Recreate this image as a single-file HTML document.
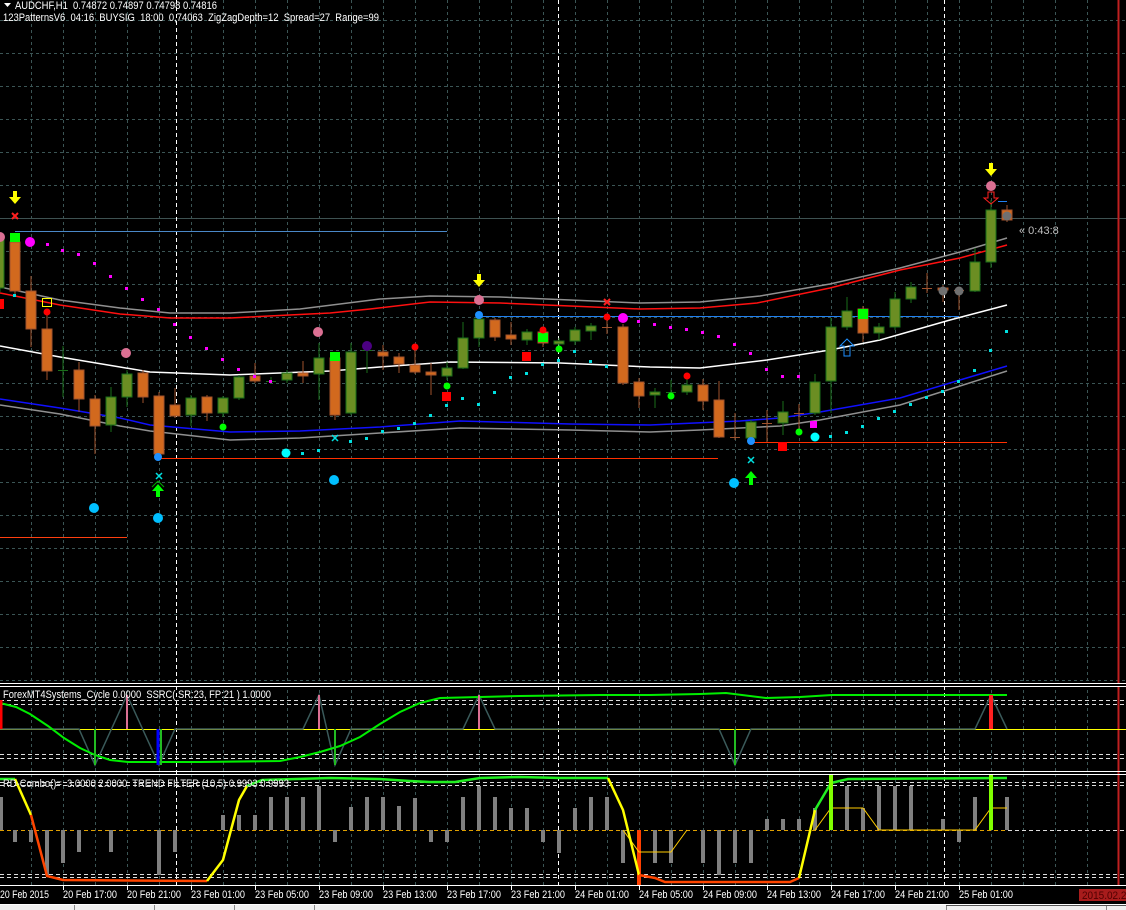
<!DOCTYPE html>
<html><head><meta charset="utf-8"><style>
html,body{margin:0;padding:0;background:#000;width:1126px;height:910px;overflow:hidden}
svg{display:block}
text{font-family:"Liberation Sans",sans-serif;font-size:11px;white-space:pre}
</style></head><body>
<svg width="1126" height="910" viewBox="0 0 1126 910" xmlns="http://www.w3.org/2000/svg" xml:space="preserve">
<rect width="1126" height="910" fill="#000"/>
<g stroke="#3b5555" stroke-width="1" stroke-dasharray="3,3">
<path d="M31.5 0V885M63.5 0V885M95.5 0V885M127.5 0V885M159.5 0V885M191.5 0V885M223.5 0V885M255.5 0V885M287.5 0V885M319.5 0V885M351.5 0V885M383.5 0V885M415.5 0V885M447.5 0V885M479.5 0V885M511.5 0V885M543.5 0V885M575.5 0V885M607.5 0V885M639.5 0V885M671.5 0V885M703.5 0V885M735.5 0V885M767.5 0V885M799.5 0V885M831.5 0V885M863.5 0V885M895.5 0V885M927.5 0V885M959.5 0V885M991.5 0V885M1023.5 0V885M1055.5 0V885M1087.5 0V885"/>
<path d="M0 20.5H1126M0 53.5H1126M0 86.5H1126M0 119.5H1126M0 152.5H1126M0 185.5H1126M0 251.5H1126M0 284.5H1126M0 317.5H1126M0 350.5H1126M0 383.5H1126M0 416.5H1126M0 449.5H1126M0 482.5H1126M0 515.5H1126M0 548.5H1126M0 581.5H1126M0 614.5H1126M0 647.5H1126M0 680.5H1126"/>
</g>
<path d="M0 218.5H1126" stroke="#3e5252"/>
<g stroke="#fff" stroke-dasharray="4,3"><path d="M176.5 0V885M558.5 0V885M944.5 0V885"/></g>
<path d="M1118.5 0V885" stroke="#c02020" stroke-width="2"/>

<path d="M15 231.5H447" stroke="#4a88c8"/>
<path d="M479 316.5H959" stroke="#2080f0"/>
<path d="M160 458.5H718" stroke="#ff3000"/>
<path d="M752 442.5H1007" stroke="#ff3000"/>
<path d="M0 537.5H127" stroke="#ff4010"/>
<path d="M998 201.5H1007" stroke="#2080f0"/>

<g fill="none" stroke-width="1.5">
<polyline stroke="#909090" points="0,287 60,300 120,308 170,313 230,313 300,309 380,299 430,296 500,297 570,300 640,303 700,302 760,296 830,284 900,268 960,252 1007,238"/>
<polyline stroke="#ff1010" points="0,293 60,305 120,314 170,318 230,318 330,313 370,309 430,302 500,303 570,306 640,309 700,308 757,303 830,288 900,270 960,258 1007,245"/>
<polyline stroke="#fff" points="0,346 60,357 120,367 150,372 230,375 330,371 380,367 450,362 560,363 650,367 700,368 767,360 830,350 880,340 950,320 1007,305"/>
<polyline stroke="#1010ff" points="0,399 60,408 120,418 150,425 230,432 300,431 380,427 460,421 570,424 650,425 740,421 780,418 820,412 900,398 960,380 1007,366"/>
<polyline stroke="#909090" points="0,405 60,414 120,426 150,431 230,440 300,438 380,433 460,428 570,430 650,432 700,430 780,426 820,420 900,405 960,386 1007,371"/>
</g>

<g stroke-width="1">
<g stroke="#1a6e1a" fill="#6b8e23">
<path d="M0 236V292M63 346V397M111 387V432M127 370V407M191 395V426M223 396V417M239 375V400M271 377V384M287 370V383M319 343V400M351 343V415M367 344V373M447 362V380M463 322V369M479 316V347M527 329V345M559 338V348M575 327V345M591 323V340M655 388V408M671 380V396M687 376V395M751 420V440M783 401V435M815 374V415M831 318V413M847 297V330M879 323V340M895 292V330M911 282V303M975 248V292M991 200V268" fill="none"/>
<rect x="-4" y="240" width="8" height="48"/>
<rect x="106" y="397" width="10" height="28"/><rect x="122" y="374" width="10" height="23"/>
<rect x="186" y="398" width="10" height="17"/><rect x="218" y="398" width="10" height="15"/>
<rect x="234" y="377" width="10" height="21"/><rect x="282" y="373" width="10" height="7"/>
<rect x="314" y="358" width="10" height="16"/><rect x="346" y="352" width="10" height="61"/>
<rect x="442" y="368" width="10" height="8"/><rect x="458" y="338" width="10" height="30"/>
<rect x="474" y="319" width="10" height="19"/><rect x="522" y="332" width="10" height="8"/>
<rect x="554" y="341" width="10" height="3"/><rect x="570" y="330" width="10" height="11"/>
<rect x="586" y="326" width="10" height="5"/><rect x="650" y="392" width="10" height="3"/>
<rect x="682" y="385" width="10" height="7"/><rect x="746" y="422" width="10" height="16"/>
<rect x="778" y="412" width="10" height="11"/><rect x="810" y="382" width="10" height="31"/>
<rect x="826" y="327" width="10" height="54"/><rect x="842" y="311" width="10" height="16"/>
<rect x="874" y="327" width="10" height="6"/><rect x="890" y="299" width="10" height="28"/>
<rect x="906" y="287" width="10" height="12"/><rect x="970" y="262" width="10" height="29"/>
<rect x="986" y="210" width="10" height="52"/>
<path d="M58 370.5H68M266 381.5H276M362 350.5H372M666 392.5H676" fill="none"/>
</g>
<g stroke="#a0522d" fill="#d2691e">
<path d="M15 233V297M31 276V347M47 315V380M79 362V412M95 395V454M143 370V403M159 392V456M175 388V418M207 395V421M255 363V383M303 361V383M335 352V420M383 345V370M399 353V373M415 350V374M431 363V395M495 318V341M511 322V345M543 330V347M607 320V334M623 324V385M639 378V408M703 379V410M719 381V438M735 413V440M767 410V442M799 404V433M863 306V342M927 273V293M943 285V302M959 287V310M1007 205V222" fill="none"/>
<rect x="10" y="242" width="10" height="49"/><rect x="26" y="291" width="10" height="38"/>
<rect x="42" y="329" width="10" height="42"/><rect x="74" y="370" width="10" height="29"/>
<rect x="90" y="399" width="10" height="27"/><rect x="138" y="373" width="10" height="24"/>
<rect x="154" y="396" width="10" height="58"/><rect x="170" y="405" width="10" height="11"/>
<rect x="202" y="397" width="10" height="16"/><rect x="250" y="376" width="10" height="5"/>
<rect x="298" y="373" width="10" height="3"/><rect x="330" y="358" width="10" height="57"/>
<rect x="378" y="352" width="10" height="4"/><rect x="394" y="357" width="10" height="7"/>
<rect x="410" y="365" width="10" height="7"/><rect x="426" y="372" width="10" height="3"/>
<rect x="490" y="320" width="10" height="17"/><rect x="506" y="335" width="10" height="4"/>
<rect x="538" y="332" width="10" height="11"/><rect x="618" y="327" width="10" height="56"/>
<rect x="634" y="382" width="10" height="14"/><rect x="698" y="385" width="10" height="16"/>
<rect x="714" y="400" width="10" height="37"/><rect x="858" y="309" width="10" height="24"/>
<rect x="938" y="288" width="10" height="2"/><rect x="1002" y="210" width="10" height="10"/>
<path d="M602 327.5H612M730 437.5H740M762 423.5H772M794 413.5H804M922 288.5H932M954 290.5H964" fill="none"/>
</g>
</g>

<g fill="#00ff00"><rect x="10" y="233" width="10" height="9"/><rect x="330" y="352" width="10" height="9"/><rect x="538" y="333" width="10" height="9"/><rect x="858" y="309" width="10" height="10"/></g>
<g fill="#ff0000"><rect x="-4" y="299" width="8" height="10"/><rect x="522" y="352" width="9" height="9"/><rect x="442" y="392" width="9" height="9"/><rect x="778" y="442" width="9" height="9"/></g>
<rect x="810" y="421" width="7" height="7" fill="#ff00ff"/>
<g fill="#ff00ff"><circle cx="30" cy="242" r="5"/><circle cx="623" cy="318" r="5"/></g>
<g fill="#db7093"><circle cx="0" cy="237" r="5"/><circle cx="126" cy="353" r="5"/><circle cx="318" cy="332" r="5"/><circle cx="479" cy="300" r="5"/><circle cx="991" cy="186" r="5"/></g>
<g fill="#1e90ff"><circle cx="158" cy="457" r="4"/><circle cx="479" cy="315" r="4"/><circle cx="751" cy="441" r="4"/></g>
<g fill="#00bfff"><circle cx="94" cy="508" r="5"/><circle cx="158" cy="518" r="5"/><circle cx="334" cy="480" r="5"/><circle cx="734" cy="483" r="5"/></g>
<g fill="#00ffff"><circle cx="286" cy="453" r="4.5"/><circle cx="815" cy="437" r="4.5"/></g>
<g fill="#ff0000"><circle cx="47" cy="312" r="3.5"/><circle cx="415" cy="347" r="3.5"/><circle cx="543" cy="330" r="3.5"/><circle cx="607" cy="317" r="3.5"/><circle cx="687" cy="376" r="3.5"/></g>
<g fill="#00ff00"><circle cx="223" cy="427" r="3.5"/><circle cx="447" cy="386" r="3.5"/><circle cx="559" cy="349" r="3.5"/><circle cx="671" cy="396" r="3.5"/><circle cx="799" cy="432" r="3.5"/></g>
<circle cx="367" cy="346" r="5" fill="#4b0082"/>
<g fill="#707070"><circle cx="1007" cy="216" r="4.5"/><circle cx="943" cy="291" r="4.5"/><circle cx="959" cy="291" r="4.5"/></g>
<g fill="#ff00ff">
<rect x="46" y="243" width="3" height="3"/><rect x="61" y="249" width="3" height="3"/><rect x="77" y="253" width="3" height="3"/><rect x="93" y="262" width="3" height="3"/><rect x="109" y="275" width="3" height="3"/><rect x="125" y="287" width="3" height="3"/><rect x="141" y="298" width="3" height="3"/><rect x="157" y="308" width="3" height="3"/><rect x="173" y="323" width="3" height="3"/><rect x="189" y="336" width="3" height="3"/><rect x="205" y="347" width="3" height="3"/><rect x="221" y="358" width="3" height="3"/><rect x="237" y="368" width="3" height="3"/><rect x="253" y="375" width="3" height="3"/><rect x="269" y="380" width="3" height="3"/>
<rect x="637" y="320" width="3" height="3"/><rect x="653" y="323" width="3" height="3"/><rect x="669" y="326" width="3" height="3"/><rect x="685" y="328" width="3" height="3"/><rect x="701" y="331" width="3" height="3"/><rect x="717" y="335" width="3" height="3"/><rect x="733" y="343" width="3" height="3"/><rect x="749" y="352" width="3" height="3"/><rect x="765" y="368" width="3" height="3"/><rect x="781" y="375" width="3" height="3"/><rect x="797" y="375" width="3" height="3"/>
</g>
<g fill="#00e0e0">
<rect x="13" y="294" width="3" height="3"/><rect x="301" y="452" width="3" height="3"/><rect x="317" y="449" width="3" height="3"/><rect x="349" y="440" width="3" height="3"/><rect x="365" y="437" width="3" height="3"/><rect x="381" y="430" width="3" height="3"/><rect x="397" y="427" width="3" height="3"/><rect x="413" y="422" width="3" height="3"/><rect x="429" y="414" width="3" height="3"/><rect x="445" y="404" width="3" height="3"/><rect x="461" y="397" width="3" height="3"/><rect x="477" y="403" width="3" height="3"/><rect x="493" y="391" width="3" height="3"/><rect x="509" y="376" width="3" height="3"/><rect x="525" y="372" width="3" height="3"/><rect x="541" y="363" width="3" height="3"/><rect x="557" y="359" width="3" height="3"/><rect x="573" y="350" width="3" height="3"/><rect x="589" y="360" width="3" height="3"/><rect x="605" y="365" width="3" height="3"/>
<rect x="829" y="435" width="3" height="3"/><rect x="845" y="431" width="3" height="3"/><rect x="861" y="425" width="3" height="3"/><rect x="877" y="417" width="3" height="3"/><rect x="893" y="410" width="3" height="3"/><rect x="909" y="403" width="3" height="3"/><rect x="925" y="396" width="3" height="3"/><rect x="941" y="390" width="3" height="3"/><rect x="957" y="380" width="3" height="3"/><rect x="973" y="369" width="3" height="3"/><rect x="989" y="349" width="3" height="3"/><rect x="1005" y="330" width="3" height="3"/>
</g>
<g fill="#ffff00"><path d="M13 191h4v6h4l-6 7-6-7h4z"/><path d="M477 274h4v6h4l-6 7-6-7h4z"/><path d="M989 163h4v6h4l-6 7-6-7h4z"/></g>
<g stroke="#ff2020" stroke-width="2"><path d="M12 213l6 6M18 213l-6 6M604 299l6 6M610 299l-6 6"/></g>
<rect x="42.5" y="298.5" width="9" height="8" fill="none" stroke="#ffff00"/>
<g stroke="#00e0e0" stroke-width="1.5"><path d="M156 473l6 6M162 473l-6 6M332 435l6 6M338 435l-6 6M748 457l6 6M754 457l-6 6"/></g>
<g fill="#00ff00"><path d="M158 484l-6 7h4v6h4v-6h4z"/><path d="M751 471l-6 7h4v7h4v-7h4z"/></g>
<path d="M158 481l-6 6M158 481l6 6" stroke="#00aa00"/>
<path d="M847 339l-7 7h4v10h6v-10h4z" fill="none" stroke="#1e90ff"/>
<path d="M988 192v6h-4l7 6 7-6h-4v-6z" fill="none" stroke="#ff2020"/>
<text x="1019" y="234" fill="#c0c0c0" font-size="13">« 0:43:8</text>

<path d="M4 3h7l-3.5 4z" fill="#fff"/>
<text x="15" y="9" fill="#fff" font-size="11" textLength="202" lengthAdjust="spacingAndGlyphs">AUDCHF,H1  0.74872 0.74897 0.74798 0.74816</text>
<text x="3" y="21" fill="#fff" font-size="11" textLength="376" lengthAdjust="spacingAndGlyphs">123PatternsV6  04:16  BUYSIG  18:00  0,74063  ZigZagDepth=12  Spread=27  Range=99</text>

<rect x="0" y="683" width="1126" height="4" fill="#000"/>
<path d="M0 683.5H1126M0 686.5H1126M0 771.5H1126M0 774.5H1126M0 885.5H1126" stroke="#fff"/>

<g stroke="#ddd" stroke-dasharray="4,3"><path d="M0 700.5H1126M0 704.5H1126M0 754.5H1126M0 758.5H1126"/></g>
<path d="M0 729.5H1126" stroke="#ffff00"/>
<polyline fill="none" stroke="#3a5a5a" stroke-width="1.5" points="0,729 79,729 95,765 127,695 159,765 175,729 303,729 319,695 335,765 351,729 463,729 479,695 495,729 719,729 735,765 751,729 975,729 991,695 1007,729"/>
<polyline fill="none" stroke="#00ee00" stroke-width="2" points="0,703 16,707 30,714 48,726 64,738 80,748 95,755 110,760 128,762 160,762 200,762 280,761 300,757 320,752 340,746 360,737 380,724 400,712 420,703 440,698 480,697 520,696 600,695 650,695 700,694 726,693 766,698 800,697 832,695 1007,695"/>
<g stroke-width="2"><path d="M1 700V729" stroke="#ff0000" stroke-width="3"/><path d="M95 729V765M335 729V765M735 729V765" stroke="#22bb22"/><path d="M127 695V729M319 695V729M479 695V729" stroke="#db7093"/><path d="M158 729V765" stroke="#0000ff" stroke-width="3"/><path d="M161 729V765" stroke="#22bb22"/><path d="M991 695V729" stroke="#ff2020" stroke-width="4"/></g>
<text x="3" y="698" fill="#fff" font-size="11" textLength="268" lengthAdjust="spacingAndGlyphs">ForexMT4Systems_Cycle 0.0000  SSRC( SR:23, FP:21 ) 1.0000</text>

<g stroke="#ddd" stroke-dasharray="4,3"><path d="M0 782.5H1126M0 785.5H1126M0 874.5H1126M0 877.5H1126M0 830.5H1126"/></g>
<path d="M0 830.5H1007" stroke="#e0a000" stroke-dasharray="4,3"/>
<g stroke="#808080" stroke-width="4">
<path d="M1 830V797M15 830V842M31 830V842M47 830V875M63 830V863M79 830V852M111 830V852M159 830V875M175 830V852M223 830V815M239 830V815M255 830V815M271 830V797M287 830V797M303 830V797M319 830V786M335 830V842M351 830V807M367 830V797M383 830V797M399 830V806M415 830V798M431 830V842M447 830V842M463 830V797M479 830V786M495 830V797M511 830V808M527 830V808M543 830V842M559 830V853M575 830V808M591 830V797M607 830V797M623 830V863M655 830V863M671 830V863M703 830V863M719 830V875M735 830V863M751 830V863M767 830V819M783 830V819M799 830V819M815 830V808M847 830V786M863 830V808M879 830V786M895 830V786M911 830V786M943 830V819M959 830V842M975 830V797M1007 830V797"/>
</g>
<path d="M639 830V885" stroke="#ff4000" stroke-width="4"/>
<polyline fill="none" stroke="#ffcc00" stroke-width="1" points="623,830 639,852 671,852 687,830"/>
<polyline fill="none" stroke="#ffcc00" stroke-width="1" points="815,830 831,808 863,808 879,830 975,830 991,808 1007,808"/>
<g fill="none" stroke-width="2.5">
<polyline stroke="#22ee22" points="0,779 15,779"/>
<polyline stroke="#ffff00" points="15,779 31,815"/>
<polyline stroke="#ff4500" points="31,815 47,876 63,880 207,881"/>
<polyline stroke="#ffff00" points="207,881 223,860 239,800 247,786"/>
<polyline stroke="#22ee22" points="247,786 262,780 330,778 380,779 410,781 430,782 455,782 480,778 520,777 560,778 608,778"/>
<polyline stroke="#ffff00" points="608,778 623,810 639,875"/>
<polyline stroke="#ff4500" points="639,875 655,878 665,882 790,882 799,878"/>
<polyline stroke="#ffff00" points="799,878 815,810"/>
<polyline stroke="#22ee22" points="815,810 831,783 848,779 1007,778"/>
</g>
<path d="M831 775V830M991 775V830" stroke="#80ff00" stroke-width="4"/>
<text x="3" y="787" fill="#eee" font-size="11" textLength="286" lengthAdjust="spacingAndGlyphs">RD-Combo()=  3.0000 2.0000  TREND FILTER (10,5) 0.9993 0.9993</text>

<g stroke="#fff"><path d="M63.5 885V890M127.5 885V890M191.5 885V890M255.5 885V890M319.5 885V890M383.5 885V890M447.5 885V890M511.5 885V890M575.5 885V890M639.5 885V890M703.5 885V890M767.5 885V890M831.5 885V890M895.5 885V890M959.5 885V890"/></g>
<g fill="#fff" font-size="11">
<text x="0" y="898" textLength="49" lengthAdjust="spacingAndGlyphs">20 Feb 2015</text><text x="63" y="898" textLength="54" lengthAdjust="spacingAndGlyphs">20 Feb 17:00</text><text x="127" y="898" textLength="54" lengthAdjust="spacingAndGlyphs">20 Feb 21:00</text><text x="191" y="898" textLength="54" lengthAdjust="spacingAndGlyphs">23 Feb 01:00</text><text x="255" y="898" textLength="54" lengthAdjust="spacingAndGlyphs">23 Feb 05:00</text><text x="319" y="898" textLength="54" lengthAdjust="spacingAndGlyphs">23 Feb 09:00</text><text x="383" y="898" textLength="54" lengthAdjust="spacingAndGlyphs">23 Feb 13:00</text><text x="447" y="898" textLength="54" lengthAdjust="spacingAndGlyphs">23 Feb 17:00</text><text x="511" y="898" textLength="54" lengthAdjust="spacingAndGlyphs">23 Feb 21:00</text><text x="575" y="898" textLength="54" lengthAdjust="spacingAndGlyphs">24 Feb 01:00</text><text x="639" y="898" textLength="54" lengthAdjust="spacingAndGlyphs">24 Feb 05:00</text><text x="703" y="898" textLength="54" lengthAdjust="spacingAndGlyphs">24 Feb 09:00</text><text x="767" y="898" textLength="54" lengthAdjust="spacingAndGlyphs">24 Feb 13:00</text><text x="831" y="898" textLength="54" lengthAdjust="spacingAndGlyphs">24 Feb 17:00</text><text x="895" y="898" textLength="54" lengthAdjust="spacingAndGlyphs">24 Feb 21:00</text><text x="959" y="898" textLength="54" lengthAdjust="spacingAndGlyphs">25 Feb 01:00</text>
</g>
<rect x="1079" y="889" width="47" height="12" fill="#a81c1c"/>
<text x="1082" y="899" fill="#500000" font-size="11" textLength="50" lengthAdjust="spacingAndGlyphs">2015.02.25</text>
<rect x="0" y="904" width="1126" height="6" fill="#f0f0f0"/>
<path d="M0 904.5H1126" stroke="#fff"/>
<g stroke="#888"><path d="M74.5 905V910M154.5 905V910M234.5 905V910M314.5 905V910M946.5 905V910M1106.5 905V910"/></g>
<path d="M946 905.5H1126" stroke="#555"/>
</svg>
</body></html>
